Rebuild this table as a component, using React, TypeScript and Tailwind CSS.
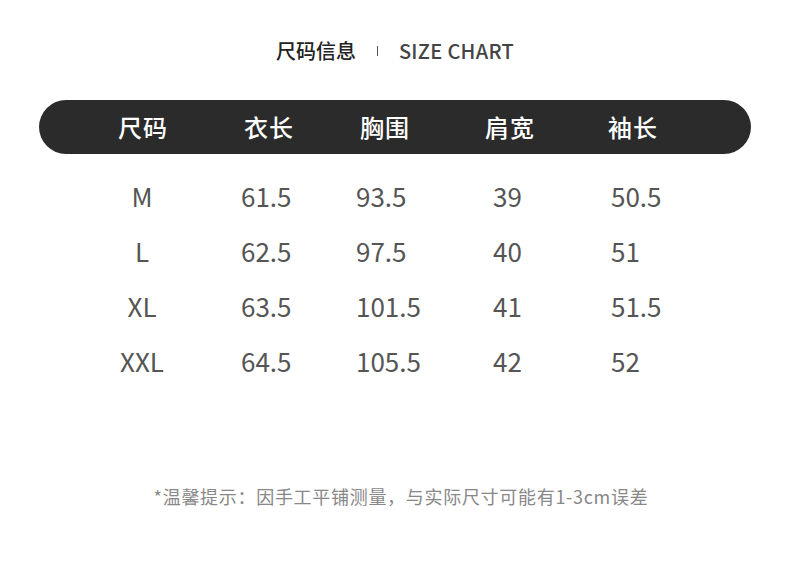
const rows = [
  ["M", "61.5", "93.5", "39", "50.5"],
  ["L", "62.5", "97.5", "40", "51"],
  ["XL", "63.5", "101.5", "41", "51.5"],
  ["XXL", "64.5", "105.5", "42", "52"],
];

const font = { fontFamily: '"Noto Sans CJK SC", "Noto Sans", sans-serif' };

export default function App() {
  return (
    <div className="w-[790px] h-[571px] bg-white overflow-hidden" style={font}>
      <div className="flex items-center justify-center pt-[37px] h-[65px] text-[20px] leading-[28px]">
        <span className="text-[#222] font-medium">尺码信息</span>
        <span className="mx-[21px] w-px h-[10px] bg-[#555]" />
        <span className="text-[#444] font-medium tracking-[0.3px]">SIZE CHART</span>
      </div>

      <div className="mx-[39px] mt-[35px] h-[54px] rounded-full bg-[#2b2b2b] flex items-center pl-[79px] text-white text-[24px] font-medium tracking-[1px]">
        <div className="w-[126px]">尺码</div>
        <div className="w-[116px]">衣长</div>
        <div className="w-[125px]">胸围</div>
        <div className="w-[123px]">肩宽</div>
        <div>袖长</div>
      </div>

      <div className="mt-[14px] text-[26px] text-[#555]">
        {rows.map((r) => (
          <div key={r[0]} className="flex items-center h-[55px]">
            <div className="ml-[92px] w-[100px] text-center">{r[0]}</div>
            <div className="ml-[49px] w-[115px]">{r[1]}</div>
            <div className="w-[137px]">{r[2]}</div>
            <div className="w-[118px]">{r[3]}</div>
            <div>{r[4]}</div>
          </div>
        ))}
      </div>

      <div className="mt-[96px] pl-[12px] text-center text-[18px] leading-[24px] text-[#888] tracking-[0.7px]">
        *温馨提示：因手工平铺测量，与实际尺寸可能有1-3cm误差
      </div>
    </div>
  );
}
